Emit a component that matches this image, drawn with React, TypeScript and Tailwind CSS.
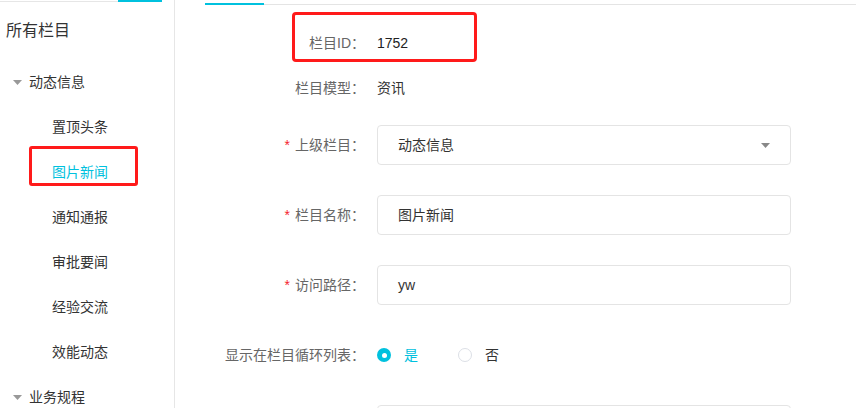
import React from "react";

const CYAN = "#00c1de";

const children = ["置顶头条", "图片新闻", "通知通报", "审批要闻", "经验交流", "效能动态"];

const Caret = ({ className }: { className?: string }) => (
  <svg width="9" height="5" viewBox="0 0 9 5" className={className}>
    <path d="M0 0 L9 0 L4.5 5 Z" fill="currentColor" />
  </svg>
);

const Label: React.FC<{ text: string; required?: boolean }> = ({ text, required }) => (
  <div className="w-[202px] shrink-0 pr-[12px] text-right text-[#666]">
    {required && <span className="mr-[5px] text-[#f5222d]">*</span>}
    {text}
  </div>
);

const Field: React.FC<{ value: string; select?: boolean }> = ({ value, select }) => (
  <div className="flex h-[40px] w-[414px] items-center justify-between rounded-[4px] border border-[#e4e4e4] px-[20px] text-[#333]">
    <span>{value}</span>
    {select && <Caret className="text-[#888]" />}
  </div>
);

export default function App() {
  return (
    <div className="flex h-[408px] w-[856px] overflow-hidden bg-white text-[14px] font-['Liberation_Sans','Noto_Sans_CJK_SC',sans-serif]">
      {/* sidebar tree */}
      <aside className="w-[175px] shrink-0 border-r border-[#e6e6e6]">
        <div className="flex h-[2px]">
          <div className="w-[118px] border-b border-[#e6e6e6]" />
          <div className="w-[44px]" style={{ backgroundColor: CYAN }} />
        </div>
        <div className="pl-[6px] pt-[17px] text-[16px] leading-[24px] text-[#333]">所有栏目</div>
        <div className="mt-[17px]">
          <div className="flex h-[45px] items-center pl-[13px] text-[#333]">
            <Caret className="mr-[7px] text-[#999]" />
            动态信息
          </div>
          {children.map((c) => (
            <div
              key={c}
              className={`relative flex h-[45px] items-center pl-[52px] ${
                c === "图片新闻" ? "text-[#00c1de]" : "text-[#333]"
              }`}
            >
              {c}
              {c === "图片新闻" && (
                <div className="absolute left-[29px] top-[-4px] h-[40px] w-[109px] rounded-[3px] border-[3px] border-[#ff1a1a]" />
              )}
            </div>
          ))}
          <div className="flex h-[45px] items-center pl-[13px] text-[#333]">
            <Caret className="mr-[7px] text-[#999]" />
            业务规程
          </div>
        </div>
      </aside>

      {/* form */}
      <main className="flex-1">
        <div className="flex h-[5px]">
          <div className="w-[30px]" />
          <div className="w-[59px] border-b-2 border-[#00c1de]" />
          <div className="flex-1 border-b border-[#e4e4e4]" />
        </div>

        <div className="relative mt-[18px] flex h-[40px] items-center">
          <Label text="栏目ID：" />
          <span className="text-[#222]">1752</span>
          <div className="absolute left-[117px] top-[-11px] h-[50px] w-[185px] rounded-[4px] border-[3px] border-[#ff1a1a]" />
        </div>

        <div className="mt-[5px] flex h-[40px] items-center">
          <Label text="栏目模型：" />
          <span className="text-[#333]">资讯</span>
        </div>

        <div className="mt-[17px] flex items-center">
          <Label text="上级栏目：" required />
          <Field value="动态信息" select />
        </div>

        <div className="mt-[30px] flex items-center">
          <Label text="栏目名称：" required />
          <Field value="图片新闻" />
        </div>

        <div className="mt-[30px] flex items-center">
          <Label text="访问路径：" required />
          <Field value="yw" />
        </div>

        <div className="mt-[30px] flex h-[40px] items-center">
          <Label text="显示在栏目循环列表：" />
          <div className="flex items-center">
            <span className="flex h-[14px] w-[14px] items-center justify-center rounded-full bg-[#00c1de]">
              <span className="h-[5px] w-[5px] rounded-full bg-white" />
            </span>
            <span className="ml-[13px] text-[#00c1de]">是</span>
            <span className="ml-[40px] h-[14px] w-[14px] rounded-full border border-[#dcdfe6]" />
            <span className="ml-[13px] text-[#333]">否</span>
          </div>
        </div>

        <div className="mt-[30px] flex items-center">
          <Label text="" />
          <Field value="" />
        </div>
      </main>
    </div>
  );
}
